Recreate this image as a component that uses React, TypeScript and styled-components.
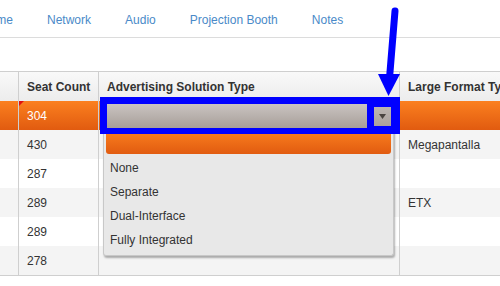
import styled, { createGlobalStyle } from "styled-components";

const GlobalStyle = createGlobalStyle`
  html, body {
    margin: 0;
    padding: 0;
    background: #fff;
    overflow: hidden;
  }
  body {
    font-family: "Liberation Sans", Arial, sans-serif;
    font-size: 12px;
    color: #333;
  }
`;

const tabs = ["Home", "Network", "Audio", "Projection Booth", "Notes"];

const rows = [
  { seats: "304", format: "", active: true },
  { seats: "430", format: "Megapantalla" },
  { seats: "287", format: "" },
  { seats: "289", format: "ETX" },
  { seats: "289", format: "" },
  { seats: "278", format: "" },
];

const options = ["None", "Separate", "Dual-Interface", "Fully Integrated"];

export default function App() {
  return (
    <Page>
      <GlobalStyle />
      <Nav>
        {tabs.map((t) => (
          <NavItem key={t}>{t}</NavItem>
        ))}
      </Nav>
      <Grid>
        <HeaderRow>
          <HeadCell />
          <HeadCell>Seat Count</HeadCell>
          <HeadCell>Advertising Solution Type</HeadCell>
          <HeadCell>Large Format Type</HeadCell>
        </HeaderRow>
        {rows.map((r, i) => (
          <Row key={i} $active={r.active} $alt={i % 2 === 1}>
            <Cell />
            <Cell $dirty={r.active}>{r.seats}</Cell>
            <Cell $editing={r.active}>
              {r.active && (
                <>
                  <Editor>
                    <EditorInput />
                    <EditorButton>
                      <svg width="7" height="5" viewBox="0 0 7 5">
                        <polygon points="0,0 7,0 3.5,5" fill="#4a4440" />
                      </svg>
                    </EditorButton>
                  </Editor>
                  <OptionList>
                    <Highlight />
                    {options.map((o) => (
                      <Option key={o}>{o}</Option>
                    ))}
                  </OptionList>
                </>
              )}
            </Cell>
            <Cell>{r.format}</Cell>
          </Row>
        ))}
      </Grid>
      <Arrow width="40" height="100" viewBox="370 0 40 100">
        <line
          x1="395"
          y1="11"
          x2="389.5"
          y2="78"
          stroke="#0000ff"
          strokeWidth="7"
          strokeLinecap="round"
        />
        <polygon points="378,74 400,74 388.5,96" fill="#0000ff" />
      </Arrow>
    </Page>
  );
}

const Page = styled.div`
  position: relative;
  width: 500px;
  height: 286px;
  overflow: hidden;
`;

const Nav = styled.div`
  display: flex;
  align-items: center;
  height: 38px;
  margin-left: -36px;
  border-bottom: 1px solid #dcdcdc;
  box-sizing: border-box;
  padding-top: 2px;
`;

const NavItem = styled.div`
  padding: 0 17px;
  color: #4a8ac8;
  font-size: 12px;
  white-space: nowrap;
`;

const Grid = styled.div`
  margin-top: 33px;
  width: 560px;
  border-top: 1px solid #cfcfcf;
  border-bottom: 1px solid #cfcfcf;
`;

const cols = "19px 80px 301px 1fr";

const HeaderRow = styled.div`
  display: grid;
  grid-template-columns: ${cols};
  height: 29px;
  background: linear-gradient(#f9f9f9, #ececec);
`;

const HeadCell = styled.div`
  display: flex;
  align-items: center;
  padding: 0 8px;
  border-right: 1px solid #cfcfcf;
  font-weight: bold;
  white-space: nowrap;
  overflow: hidden;
`;

const Row = styled.div<{ $active?: boolean; $alt?: boolean }>`
  display: grid;
  grid-template-columns: ${cols};
  height: 29px;
  background: ${(p) =>
    p.$active
      ? "linear-gradient(#fb801f, #e15b10)"
      : p.$alt
      ? "#f4f4f4"
      : "#fff"};
  color: ${(p) => (p.$active ? "#fff" : "#333")};
`;

const Cell = styled.div<{ $dirty?: boolean; $editing?: boolean }>`
  position: relative;
  display: flex;
  align-items: center;
  padding: 0 8px;
  border-right: 1px solid #cfcfcf;
  white-space: nowrap;
  overflow: ${(p) => (p.$editing ? "visible" : "hidden")};
  z-index: ${(p) => (p.$editing ? 2 : "auto")};

  &::before {
    content: "";
    display: ${(p) => (p.$dirty ? "block" : "none")};
    position: absolute;
    top: 0;
    left: 0;
    border-top: 5px solid #e01010;
    border-right: 5px solid transparent;
  }
`;

const Editor = styled.div`
  position: absolute;
  left: 1px;
  top: -4px;
  width: 300px;
  height: 37px;
  box-sizing: border-box;
  padding: 7px 9px 6px 7px;
  background: #0000ff;
  display: flex;
  align-items: center;
  gap: 7px;
  z-index: 3;
`;

const EditorInput = styled.div`
  flex: 1;
  height: 24px;
  background: linear-gradient(#cac4c1, #a79e99);
`;

const EditorButton = styled.div`
  width: 17px;
  height: 19px;
  background: linear-gradient(#bdb6b2, #aaa19c);
  display: flex;
  align-items: center;
  justify-content: center;
`;

const OptionList = styled.div`
  position: absolute;
  left: 4px;
  top: 29px;
  width: 291px;
  box-sizing: border-box;
  padding: 0 2px 3px;
  background: #e8e8e8;
  border: 1px solid #c8c8c8;
  border-top: none;
  border-radius: 0 0 3px 3px;
  box-shadow: 1px 2px 2px rgba(0, 0, 0, 0.3);
  color: #333;
`;

const Highlight = styled.div`
  height: 24px;
  margin-bottom: 2px;
  background: linear-gradient(#fb801f, #e15b10);
  border-radius: 0 0 3px 3px;
`;

const Option = styled.div`
  height: 24px;
  line-height: 24px;
  padding-left: 4px;
`;

const Arrow = styled.svg`
  position: absolute;
  left: 370px;
  top: 0;
  z-index: 5;
`;
